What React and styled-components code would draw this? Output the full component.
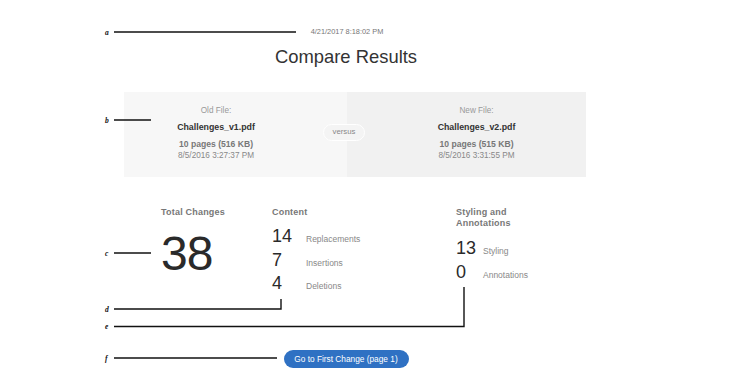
import React from 'react';
import styled, { createGlobalStyle } from 'styled-components';

const GlobalStyle = createGlobalStyle`
  html, body {
    margin: 0;
    padding: 0;
    background: #fff;
  }
  body {
    font-family: "Liberation Sans", Arial, sans-serif;
    color: #333;
  }
`;

const files = [
  { label: 'Old File:', name: 'Challenges_v1.pdf', size: '10 pages (516 KB)', date: '8/5/2016 3:27:37 PM' },
  { label: 'New File:', name: 'Challenges_v2.pdf', size: '10 pages (515 KB)', date: '8/5/2016 3:31:55 PM' },
];

const content = [
  { n: 14, label: 'Replacements' },
  { n: 7, label: 'Insertions' },
  { n: 4, label: 'Deletions' },
];

const styling = [
  { n: 13, label: 'Styling' },
  { n: 0, label: 'Annotations' },
];

// callouts: letter, y of the leader, end x, and an optional upward tick
const callouts = [
  { k: 'a', y: 32, x2: 296 },
  { k: 'b', y: 120, x2: 151 },
  { k: 'c', y: 253, x2: 151 },
  { k: 'd', y: 309, x2: 281, up: 299 },
  { k: 'e', y: 326.5, x2: 464, up: 287 },
  { k: 'f', y: 358, x2: 277 },
];

export default function App() {
  return (
    <Page>
      <GlobalStyle />
      <Column>
        <Header>
          <Stamp>4/21/2017 8:18:02 PM</Stamp>
          <Title>Compare Results</Title>
        </Header>

        <FileBox>
          <FileCell>
            <FileLabel>{files[0].label}</FileLabel>
            <FileName>{files[0].name}</FileName>
            <FileSize>{files[0].size}</FileSize>
            <FileDate>{files[0].date}</FileDate>
          </FileCell>
          <VersusCell>
            <Versus>versus</Versus>
          </VersusCell>
          <FileCell>
            <FileLabel>{files[1].label}</FileLabel>
            <FileName>{files[1].name}</FileName>
            <FileSize>{files[1].size}</FileSize>
            <FileDate>{files[1].date}</FileDate>
          </FileCell>
        </FileBox>

        <Stats>
          <StatGroup>
            <StatHeading>Total Changes</StatHeading>
            <Total>38</Total>
          </StatGroup>
          <StatGroup>
            <StatHeading>Content</StatHeading>
            {content.map((c) => (
              <StatRow key={c.label}>
                <StatNum $w={34}>{c.n}</StatNum>
                <StatLabel>{c.label}</StatLabel>
              </StatRow>
            ))}
          </StatGroup>
          <StatGroup>
            <StatHeading>Styling and<br />Annotations</StatHeading>
            {styling.map((c) => (
              <StatRow key={c.label} $h={24}>
                <StatNum $w={27}>{c.n}</StatNum>
                <StatLabel>{c.label}</StatLabel>
              </StatRow>
            ))}
          </StatGroup>
        </Stats>

        <Footer>
          <GoButton>Go to First Change (page 1)</GoButton>
        </Footer>
      </Column>

      <Callouts width="750" height="374">
        {callouts.map((c) => (
          <g key={c.k}>
            <text x="105" y={c.y + 2.5} fontSize="7.5" fontStyle="italic" fontWeight="bold" fontFamily="Liberation Serif, serif" fill="#111">{c.k}</text>
            <polyline
              points={c.up ? `114,${c.y} ${c.x2},${c.y} ${c.x2},${c.up}` : `114,${c.y} ${c.x2},${c.y}`}
              fill="none"
              stroke="#111"
              strokeWidth="1.4"
            />
          </g>
        ))}
      </Callouts>
    </Page>
  );
}

const Page = styled.div`
  position: relative;
  width: 750px;
  height: 374px;
  overflow: hidden;
`;

const Column = styled.div`
  width: 462px;
  margin-left: 124px;
  padding-top: 27px;
`;

const Header = styled.div`
  display: flex;
  flex-direction: column;
  align-items: center;
  padding-right: 18px;
`;

const Stamp = styled.div`
  font-size: 7.4px;
  line-height: 10px;
  color: #777;
  padding-left: 2px;
`;

const Title = styled.h1`
  margin: 9px 0 0;
  font-size: 18.4px;
  font-weight: normal;
  line-height: 22px;
  color: #333;
`;

const FileBox = styled.div`
  margin-top: 24px;
  height: 85px;
  display: grid;
  grid-template-columns: 184px 59px 1fr;
  background: linear-gradient(to right, #f7f7f7 223px, #f1f1f1 223px);
`;

const FileCell = styled.div`
  display: flex;
  flex-direction: column;
  align-items: center;
  padding-top: 13px;
  font-size: 8.2px;
  line-height: 11px;
`;

const FileLabel = styled.div`
  color: #999;
  margin-bottom: 6px;
`;

const FileName = styled.div`
  color: #333;
  font-size: 8.8px;
  font-weight: bold;
  margin-bottom: 6px;
`;

const FileSize = styled.div`
  color: #777;
  font-size: 8.6px;
  font-weight: bold;
`;

const FileDate = styled.div`
  color: #888;
`;

const VersusCell = styled.div`
  display: flex;
  align-items: center;
  justify-content: flex-end;
  padding-right: 2px;
  padding-bottom: 4px;
`;

const Versus = styled.span`
  display: inline-block;
  box-sizing: border-box;
  width: 42px;
  height: 17px;
  line-height: 14px;
  text-align: center;
  font-size: 7.8px;
  color: #888;
  background: #f4f4f4;
  border: 1.5px solid #fff;
  border-radius: 9px;
`;

const Stats = styled.div`
  margin-top: 30px;
  margin-left: 37px;
  display: grid;
  grid-template-columns: 111px 184px auto;
  align-items: start;
`;

const StatGroup = styled.div`
  display: flex;
  flex-direction: column;
`;

const StatHeading = styled.div`
  font-size: 9px;
  line-height: 11px;
  font-weight: bold;
  color: #777;
  letter-spacing: 0.2px;
  margin-bottom: 7px;
`;

const Total = styled.div`
  margin-top: 5px;
  font-size: 48px;
  line-height: 48px;
  color: #2a2a2a;
  letter-spacing: -1px;
`;

const StatRow = styled.div`
  display: flex;
  align-items: baseline;
  height: ${(p) => p.$h || 23.5}px;
  line-height: ${(p) => p.$h || 23.5}px;
`;

const StatNum = styled.span`
  width: ${(p) => p.$w}px;
  font-size: 18px;
  color: #2a2a2a;
`;

const StatLabel = styled.span`
  font-size: 8.5px;
  color: #888;
`;

const Footer = styled.div`
  display: flex;
  justify-content: center;
  padding-right: 18px;
  margin-top: 54px;
`;

const GoButton = styled.button`
  height: 18px;
  width: 125px;
  border: none;
  border-radius: 9px;
  background: #2f71c3;
  color: #fff;
  font-family: "Liberation Sans", Arial, sans-serif;
  font-size: 8.3px;
  padding: 0;
  cursor: pointer;
`;

const Callouts = styled.svg`
  position: absolute;
  left: 0;
  top: 0;
  pointer-events: none;
`;
